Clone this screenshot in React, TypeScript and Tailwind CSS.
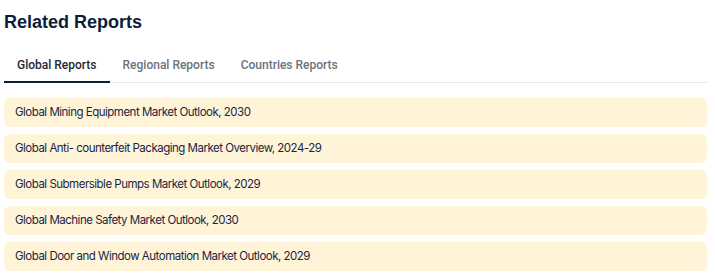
import React, { useState } from "react";

const tabs = ["Global Reports", "Regional Reports", "Countries Reports"];

const reports = [
  "Global Mining Equipment Market Outlook, 2030",
  "Global Anti- counterfeit Packaging Market Overview, 2024-29",
  "Global Submersible Pumps Market Outlook, 2029",
  "Global Machine Safety Market Outlook, 2030",
  "Global Door and Window Automation Market Outlook, 2029",
];

export default function App() {
  const [active, setActive] = useState(0);

  return (
    <div className="w-[715px] h-[280px] bg-white px-1 pt-[10px] font-['Roboto',sans-serif]">
      <h2 className="font-['Liberation_Sans',Arial,sans-serif] text-[18px] leading-[24px] font-bold text-[#0b1d3a]">
        Related Reports
      </h2>
      <div className="mt-[23px] mr-1 flex border-b border-[#e5e7eb]">
        {tabs.map((tab, i) => (
          <button
            key={tab}
            onClick={() => setActive(i)}
            className={
              i === active
                ? "px-[13px] pb-[8px] text-[12px] leading-[16px] font-medium text-[#1f2937] border-b-2 border-[#0b1d3a] -mb-px"
                : "px-[13px] pb-[8px] text-[12px] leading-[16px] font-medium text-[#6b7280] border-b-2 border-transparent -mb-px"
            }
          >
            {tab}
          </button>
        ))}
      </div>
      <ul className="mt-[15px] mr-1 flex flex-col gap-[7px]">
        {reports.map((r) => (
          <li
            key={r}
            className="h-[29px] flex items-center px-[11px] rounded-md bg-[#fff4d8] font-['Inter',sans-serif] text-[11.5px] tracking-[-0.5px] text-[#1a2544]"
          >
            {r}
          </li>
        ))}
      </ul>
    </div>
  );
}
